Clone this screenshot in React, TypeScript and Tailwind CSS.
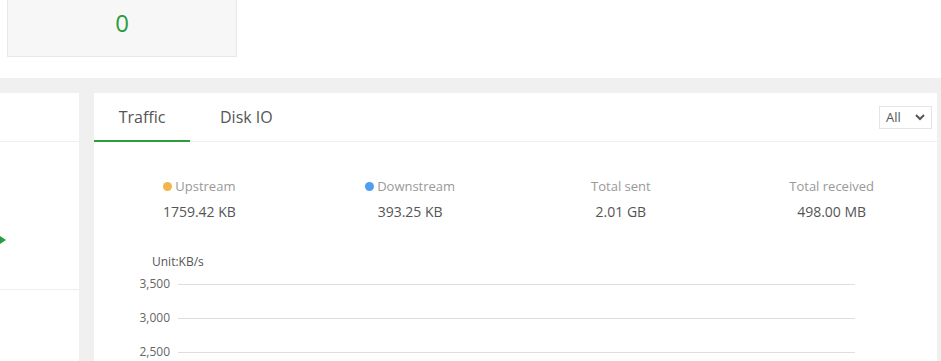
import React from "react";

const font = { fontFamily: '"Open Sans", "Noto Sans", Arial, sans-serif' };

function Stat({ dot, label, value }: { dot?: string; label: string; value: string }) {
  return (
    <div className="flex flex-col items-center">
      <div className="flex items-center h-[18px] text-[13px] text-[#999] leading-[18px]">
        {dot && <span className={`inline-block w-[9px] h-[9px] rounded-full mr-[3px] ${dot}`} />}
        <span>{label}</span>
      </div>
      <div className="mt-[8px] text-[14px] text-[#555] leading-[18px]">{value}</div>
    </div>
  );
}

function GridRow({ label }: { label: string }) {
  return (
    <div className="flex items-center h-[34px] shrink-0">
      <div className="w-[76px] text-right text-[12px] text-[#666] leading-none">{label}</div>
      <div className="ml-[8px] w-[677px] h-px bg-[#dedede]" />
    </div>
  );
}

export default function App() {
  return (
    <div className="w-[941px] h-[361px] bg-[#f0f0f0] overflow-hidden flex flex-col" style={font}>
      <div className="h-[78px] bg-white pl-[7px] shrink-0">
        <div className="w-[230px] h-[57px] bg-[#f7f7f7] border border-t-0 border-[#e8e8e8] flex justify-center pt-[6px]">
          <span className="text-[24px] leading-[34px] text-[#2a9d3f]">0</span>
        </div>
      </div>
      <div className="flex mt-[15px] gap-[15px] flex-1 min-h-0 shrink-0">
        <div className="w-[79px] bg-white shrink-0 flex flex-col">
          <div className="h-[49px] border-b border-[#eee] shrink-0" />
          <div className="h-[148px] border-b border-[#eee] relative shrink-0">
            <svg className="absolute left-0 top-[94px]" width="6" height="8" viewBox="0 0 6 8">
              <path d="M0 0 L6 4 L0 8 Z" fill="#2a9d3f" />
            </svg>
          </div>
        </div>
        <div className="w-[843px] bg-white shrink-0 flex flex-col overflow-hidden">
          <div className="h-[49px] border-b border-[#eee] flex items-stretch relative shrink-0">
            <div className="w-[96px] flex items-center justify-center text-[16px] text-[#555] border-b-2 border-[#2a9d3f] mb-[-1px]">
              Traffic
            </div>
            <div className="pl-[30px] flex items-center text-[16px] text-[#555]">Disk IO</div>
            <div className="absolute left-[785px] top-[13px] w-[53px] h-[23px] border border-[#e4e4e4] flex items-center justify-between pl-[6px] pr-[6px] text-[13px] text-[#555]">
              <span>All</span>
              <svg width="10" height="7" viewBox="0 0 10 7">
                <path d="M1 1 L5 5 L9 1" stroke="#555" strokeWidth="2" fill="none" />
              </svg>
            </div>
          </div>
          <div className="grid grid-cols-4 mt-[35px] shrink-0">
            <Stat dot="bg-[#f2b54e]" label="Upstream" value="1759.42 KB" />
            <Stat dot="bg-[#4e9ff0]" label="Downstream" value="393.25 KB" />
            <Stat label="Total sent" value="2.01 GB" />
            <Stat label="Total received" value="498.00 MB" />
          </div>
          <div className="mt-[33px] pl-[58px] text-[12px] text-[#555] leading-[16px] shrink-0">Unit:KB/s</div>
          <div className="-mt-[3px] flex flex-col shrink-0">
            <GridRow label="3,500" />
            <GridRow label="3,000" />
            <GridRow label="2,500" />
          </div>
        </div>
      </div>
    </div>
  );
}
